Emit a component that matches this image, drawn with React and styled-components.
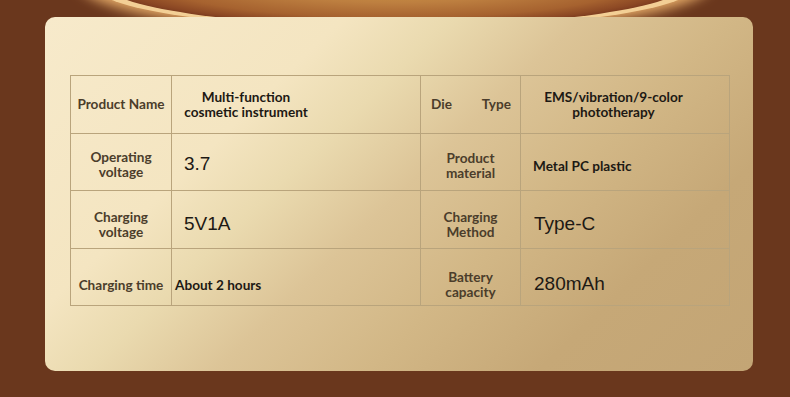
import React from "react";
import styled, { createGlobalStyle } from "styled-components";

const Global = createGlobalStyle`
  html, body { margin: 0; padding: 0; }
  body { background: #6a371d; width: 790px; height: 397px; overflow: hidden; }
`;

const Page = styled.div`
  position: relative;
  width: 790px;
  height: 397px;
  background: #6a371d;
  padding: 17px 37px 0 45px;
  box-sizing: border-box;
`;

const Arc = styled.svg`
  position: absolute;
  left: 0;
  top: 0;
  z-index: 0;
`;

const Card = styled.div`
  position: relative;
  z-index: 1;
  width: 708px;
  height: 354px;
  border-radius: 10px;
  box-sizing: border-box;
  padding: 58px 0 0 25px;
  background: linear-gradient(
    136deg,
    #f7eacb 0%,
    #f4e5c1 28%,
    #eadaaf 38%,
    #dcc497 50%,
    #d2b786 64%,
    #c6a877 80%,
    #c3a575 100%
  );
`;

const Table = styled.table`
  border-collapse: collapse;
  table-layout: fixed;
  width: 659px;
`;

const Row = styled.tr`
  height: ${(p) => p.$h}px;
`;

const Cell = styled.td`
  border: 1px solid #b9a47c;
  padding: ${(p) => p.$pt || 0}px ${(p) => p.$pr || 0}px 0 ${(p) => p.$pl || 0}px;
  text-align: ${(p) => p.$align || "center"};
  vertical-align: middle;
  box-sizing: border-box;
`;

const Label = styled.div`
  font-family: Lato, "Noto Sans", sans-serif;
  font-weight: 700;
  font-size: 13.6px;
  line-height: 15px;
  color: #4b3d2b;
  white-space: nowrap;
`;

const SplitLabel = styled(Label)`
  display: flex;
  justify-content: space-between;
  padding: 0 9px 0 10px;
`;

const Strong = styled.div`
  font-family: Lato, "Noto Sans", sans-serif;
  font-weight: 700;
  font-size: 13.6px;
  line-height: 15px;
  color: #1d1914;
  white-space: nowrap;
`;

const Big = styled.div`
  font-family: "Liberation Sans", Arial, sans-serif;
  font-weight: 400;
  font-size: 19px;
  line-height: 22px;
  color: #1d1914;
  white-space: nowrap;
`;

export default function App() {
  return (
    <>
      <Global />
      <Page>
        <Arc width="790" height="40" viewBox="0 0 790 40">
          <defs>
            <radialGradient id="innerGlow" cx="0.5" cy="0.5" r="0.5">
              <stop offset="0" stopColor="#d19b45" />
              <stop offset="0.45" stopColor="#bd7f40" />
              <stop offset="0.8" stopColor="#a6622f" />
              <stop offset="0.95" stopColor="#8c4824" />
              <stop offset="1" stopColor="#7e3d1f" />
            </radialGradient>
            <filter id="soft" x="-20%" y="-50%" width="140%" height="200%">
              <feGaussianBlur stdDeviation="6" />
            </filter>
          </defs>
          <ellipse cx="395" cy="-18" rx="318" ry="52" fill="#e2a866" filter="url(#soft)" />
          <ellipse cx="395" cy="-16" rx="303" ry="45" fill="#f3cf95" />
          <ellipse cx="395" cy="-16" rx="290" ry="42" fill="url(#innerGlow)" />
        </Arc>
        <Card>
          <Table>
            <colgroup>
              <col style={{ width: 101 }} />
              <col style={{ width: 249 }} />
              <col style={{ width: 100 }} />
              <col style={{ width: 209 }} />
            </colgroup>
            <tbody>
              <Row $h={58}>
                <Cell>
                  <Label>Product Name</Label>
                </Cell>
                <Cell $pr={100}>
                  <Strong>
                    Multi-function
                    <br />
                    cosmetic instrument
                  </Strong>
                </Cell>
                <Cell>
                  <SplitLabel>
                    <span>Die</span>
                    <span>Type</span>
                  </SplitLabel>
                </Cell>
                <Cell $pr={23}>
                  <Strong>
                    EMS/vibration/9-color
                    <br />
                    phototherapy
                  </Strong>
                </Cell>
              </Row>
              <Row $h={57}>
                <Cell $pt={5}>
                  <Label>
                    Operating
                    <br />
                    voltage
                  </Label>
                </Cell>
                <Cell $pt={4} $pl={12} $align="left">
                  <Big>3.7</Big>
                </Cell>
                <Cell $pt={7}>
                  <Label>
                    Product
                    <br />
                    material
                  </Label>
                </Cell>
                <Cell $pt={9} $pl={12} $align="left">
                  <Strong>Metal PC plastic</Strong>
                </Cell>
              </Row>
              <Row $h={58}>
                <Cell $pt={10}>
                  <Label>
                    Charging
                    <br />
                    voltage
                  </Label>
                </Cell>
                <Cell $pt={8} $pl={12} $align="left">
                  <Big>5V1A</Big>
                </Cell>
                <Cell $pt={11}>
                  <Label>
                    Charging
                    <br />
                    Method
                  </Label>
                </Cell>
                <Cell $pt={8} $pl={13} $align="left">
                  <Big>Type-C</Big>
                </Cell>
              </Row>
              <Row $h={57}>
                <Cell $pt={17}>
                  <Label>Charging time</Label>
                </Cell>
                <Cell $pt={17} $pl={3} $align="left">
                  <Strong>About 2 hours</Strong>
                </Cell>
                <Cell $pt={16}>
                  <Label>
                    Battery
                    <br />
                    capacity
                  </Label>
                </Cell>
                <Cell $pt={14} $pl={13} $align="left">
                  <Big>280mAh</Big>
                </Cell>
              </Row>
            </tbody>
          </Table>
        </Card>
      </Page>
    </>
  );
}
